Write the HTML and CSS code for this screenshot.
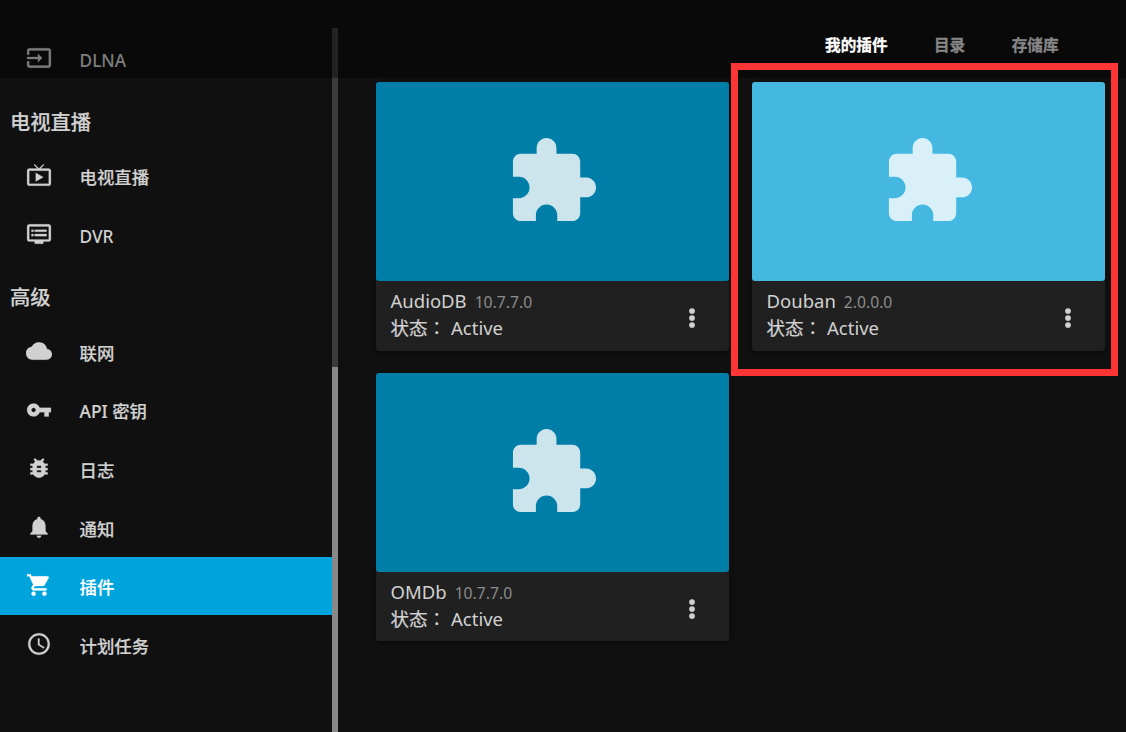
FILE: index.html
```
<!DOCTYPE html>
<html lang="zh-CN">
<head>
<meta charset="utf-8">
<title>我的插件</title>
<link rel="stylesheet" href="styles.css">
</head>
<body>
<div class="app">
  <nav class="sidebar">
    <div class="menu">
      <a class="item"><svg class="icon" viewBox="0 0 24 24"><path d="M21 3.01H3c-1.1 0-2 .9-2 2V9h2V4.99h18v14.03H3V15H1v4.01c0 1.1.9 1.98 2 1.98h18c1.1 0 2-.88 2-1.98v-14c0-1.11-.9-2-2-2zM11 16l4-4-4-4v3H1v2h10v3z"/></svg><span>DLNA</span></a>
      <h2 class="heading">电视直播</h2>
      <a class="item"><svg class="icon" viewBox="0 0 24 24"><path d="M21 6h-7.59l3.29-3.29L16 2l-4 4-4-4-.7.71L10.59 6H3c-1.1 0-2 .89-2 2v12c0 1.1.9 2 2 2h18c1.1 0 2-.9 2-2V8c0-1.11-.9-2-2-2zm0 14H3V8h18v12zM9 10v8l7-4z"/></svg><span class="cjk">电视直播</span></a>
      <a class="item"><svg class="icon" viewBox="0 0 24 24"><path d="M21 3H3c-1.1 0-2 .9-2 2v12c0 1.1.9 2 2 2h5v2h8v-2h5c1.1 0 1.99-.9 1.99-2L23 5c0-1.1-.9-2-2-2zm0 14H3V5h18v12zm-2-9H8v2h11V8zm0 4H8v2h11v-2zM7 8H5v2h2V8zm0 4H5v2h2v-2z"/></svg><span>DVR</span></a>
      <h2 class="heading">高级</h2>
      <a class="item"><svg class="icon" viewBox="0 0 24 24"><path d="M19.35 10.04C18.67 6.59 15.64 4 12 4 9.11 4 6.6 5.64 5.35 8.04 2.34 8.36 0 10.91 0 14c0 3.31 2.69 6 6 6h13c2.76 0 5-2.24 5-5 0-2.64-2.05-4.78-4.65-4.96z"/></svg><span class="cjk">联网</span></a>
      <a class="item"><svg class="icon" viewBox="0 0 24 24"><path d="M12.65 10C11.83 7.67 9.61 6 7 6c-3.31 0-6 2.69-6 6s2.69 6 6 6c2.61 0 4.83-1.67 5.65-4H17v4h4v-4h2v-4H12.65zM7 14c-1.1 0-2-.9-2-2s.9-2 2-2 2 .9 2 2-.9 2-2 2z"/></svg><span class="cjk">API 密钥</span></a>
      <a class="item"><svg class="icon" viewBox="0 0 24 24"><path d="M20 8h-2.81c-.45-.78-1.07-1.45-1.82-1.96L17 4.41 15.59 3l-2.17 2.17C12.96 5.06 12.49 5 12 5s-.96.06-1.41.17L8.41 3 7 4.41l1.62 1.63C7.88 6.55 7.26 7.22 6.81 8H4v2h2.09c-.05.33-.09.66-.09 1v1H4v2h2v1c0 .34.04.67.09 1H4v2h2.81c1.04 1.79 2.97 3 5.19 3s4.15-1.21 5.19-3H20v-2h-2.09c.05-.33.09-.66.09-1v-1h2v-2h-2v-1c0-.34-.04-.67-.09-1H20V8zm-6 8h-4v-2h4v2zm0-4h-4v-2h4v2z"/></svg><span class="cjk">日志</span></a>
      <a class="item"><svg class="icon" viewBox="0 0 24 24"><path d="M12 22c1.1 0 2-.9 2-2h-4c0 1.1.89 2 2 2zm6-6v-5c0-3.07-1.64-5.64-4.5-6.32V4c0-.83-.67-1.5-1.5-1.5s-1.5.67-1.5 1.5v.68C7.63 5.36 6 7.92 6 11v5l-2 2v1h16v-1l-2-2z"/></svg><span class="cjk">通知</span></a>
      <a class="item active"><svg class="icon" viewBox="0 0 24 24"><path d="M7 18c-1.1 0-1.99.9-1.99 2S5.9 22 7 22s2-.9 2-2-.9-2-2-2zM1 2v2h2l3.6 7.59-1.35 2.45c-.16.28-.25.61-.25.96 0 1.1.9 2 2 2h12v-2H7.42c-.14 0-.25-.11-.25-.25l.03-.12.9-1.63h7.45c.75 0 1.41-.41 1.75-1.03l3.58-6.49c.08-.14.12-.31.12-.48 0-.55-.45-1-1-1H5.21l-.94-2H1zm16 16c-1.1 0-1.99.9-1.99 2s.89 2 1.99 2 2-.9 2-2-.9-2-2-2z"/></svg><span class="cjk">插件</span></a>
      <a class="item"><svg class="icon" viewBox="0 0 24 24"><path d="M11.99 2C6.47 2 2 6.48 2 12s4.47 10 9.99 10C17.52 22 22 17.52 22 12S17.52 2 11.99 2zM12 20c-4.42 0-8-3.58-8-8s3.58-8 8-8 8 3.58 8 8-3.58 8-8 8zm.5-13H11v6l5.25 3.15.75-1.23-4.5-2.67z"/></svg><span class="cjk">计划任务</span></a>
    </div>
    <div class="scrollbar"><div class="thumb"></div></div>
  </nav>
  <main class="content">
    <article class="card">
      <div class="cover"><svg class="puzzle" viewBox="0 0 24 24"><path d="M20.5 11H19V7c0-1.1-.9-2-2-2h-4V3.500C13 2.120 11.880 1 10.500 1S8 2.120 8 3.500V5H4c-1.100 0-1.990.9-1.990 2v3.800H3.500c1.490 0 2.700 1.210 2.700 2.700s-1.210 2.700-2.700 2.700H2V20c0 1.100.9 2 2 2h3.800v-1.500c0-1.490 1.210-2.700 2.700-2.700s2.700 1.210 2.700 2.700V22H17c1.100 0 2-.9 2-2v-4h1.500c1.380 0 2.500-1.120 2.500-2.500S21.880 11 20.500 11z"/></svg></div>
      <div class="footer">
        <div class="info"><div class="name">AudioDB<span class="version">10.7.7.0</span></div><div class="state"><span class="label">状态</span><span lang="zh-TW">：</span><span class="status">Active</span></div></div>
        <svg class="more" viewBox="0 0 24 24"><path d="M12 8c1.100 0 2-.9 2-2s-.9-2-2-2-2 .9-2 2 .9 2 2 2zm0 2c-1.100 0-2 .9-2 2s.9 2 2 2 2-.9 2-2-.9-2-2-2zm0 6c-1.100 0-2 .9-2 2s.9 2 2 2 2-.9 2-2-.9-2-2-2z"/></svg>
      </div>
    </article>
    <article class="card">
      <div class="cover light"><svg class="puzzle" viewBox="0 0 24 24"><path d="M20.5 11H19V7c0-1.1-.9-2-2-2h-4V3.500C13 2.120 11.880 1 10.500 1S8 2.120 8 3.500V5H4c-1.100 0-1.990.9-1.990 2v3.800H3.500c1.490 0 2.700 1.210 2.700 2.700s-1.210 2.700-2.700 2.700H2V20c0 1.100.9 2 2 2h3.800v-1.500c0-1.490 1.210-2.700 2.700-2.700s2.700 1.210 2.700 2.700V22H17c1.100 0 2-.9 2-2v-4h1.500c1.380 0 2.500-1.120 2.500-2.500S21.880 11 20.500 11z"/></svg></div>
      <div class="footer">
        <div class="info"><div class="name">Douban<span class="version">2.0.0.0</span></div><div class="state"><span class="label">状态</span><span lang="zh-TW">：</span><span class="status">Active</span></div></div>
        <svg class="more" viewBox="0 0 24 24"><path d="M12 8c1.100 0 2-.9 2-2s-.9-2-2-2-2 .9-2 2 .9 2 2 2zm0 2c-1.100 0-2 .9-2 2s.9 2 2 2 2-.9 2-2-.9-2-2-2zm0 6c-1.100 0-2 .9-2 2s.9 2 2 2 2-.9 2-2-.9-2-2-2z"/></svg>
      </div>
      <div class="highlight"></div>
    </article>
    <article class="card">
      <div class="cover"><svg class="puzzle" viewBox="0 0 24 24"><path d="M20.5 11H19V7c0-1.1-.9-2-2-2h-4V3.500C13 2.120 11.880 1 10.500 1S8 2.120 8 3.500V5H4c-1.100 0-1.990.9-1.990 2v3.800H3.500c1.490 0 2.700 1.210 2.700 2.700s-1.210 2.700-2.700 2.700H2V20c0 1.100.9 2 2 2h3.800v-1.500c0-1.490 1.210-2.700 2.700-2.700s2.700 1.210 2.700 2.700V22H17c1.100 0 2-.9 2-2v-4h1.500c1.380 0 2.500-1.120 2.500-2.500S21.880 11 20.500 11z"/></svg></div>
      <div class="footer">
        <div class="info"><div class="name">OMDb<span class="version">10.7.7.0</span></div><div class="state"><span class="label">状态</span><span lang="zh-TW">：</span><span class="status">Active</span></div></div>
        <svg class="more" viewBox="0 0 24 24"><path d="M12 8c1.100 0 2-.9 2-2s-.9-2-2-2-2 .9-2 2 .9 2 2 2zm0 2c-1.100 0-2 .9-2 2s.9 2 2 2 2-.9 2-2-.9-2-2-2zm0 6c-1.100 0-2 .9-2 2s.9 2 2 2 2-.9 2-2-.9-2-2-2z"/></svg>
      </div>
    </article>
  </main>
  <header class="topbar">
    <span class="tab current">我的插件</span><span class="tab">目录</span><span class="tab">存储库</span>
  </header>
</div>
</body>
</html>
```
FILE: styles.css
```
* { box-sizing: border-box; }
body {
  margin: 0;
  background: #101010;
  color: #d1d1d1;
  font-family: "Noto Sans", "Noto Sans CJK TC", sans-serif;
}
.app {
  position: relative;
  display: flex;
  width: 1126px;
  height: 732px;
  overflow: hidden;
}
.sidebar { display: flex; flex: none; width: 338px; padding-top: 28px; }
.menu { flex: 1; padding-top: 1.2px; }
.item, .heading {
  display: flex;
  align-items: center;
  height: 58.6px;
  margin: 0;
  font-family: "Noto Sans", "Noto Sans CJK SC", sans-serif;
  font-weight: 500;
}
.item { padding-left: 26px; font-size: 17.3px; }
.item span { padding-top: 4px; }
.item .cjk { padding-top: 1.6px; font-size: 17.4px; -webkit-text-stroke: .2px currentColor; }
.heading { padding: 7px 0 0 10px; font-size: 20.3px; -webkit-text-stroke: .2px currentColor; }
.icon { width: 26px; height: 26px; margin: 0 27.5px 1px 0; fill: currentColor; stroke: currentColor; stroke-width: .2; }
.active { background: #00a4dc; color: #fff; }
.scrollbar { width: 6px; padding-top: 339px; background: #3b3b3b; }
.thumb { height: 100%; background: #888; }
.content {
  display: grid;
  grid-template-columns: 353px 353px;
  grid-template-rows: 269px 268px;
  gap: 22px 23px;
  align-content: start;
  padding: 82px 0 0 38px;
}
.card {
  position: relative;
  background: #202020;
  border-radius: 3px;
  box-shadow: 0 1px 4px rgba(0, 0, 0, .4);
}
.cover {
  display: flex;
  align-items: center;
  justify-content: center;
  height: 199px;
  background: #007ea8;
  border-radius: 3px;
}
.light { background: #44b8e0; }
.puzzle { width: 95px; height: 95px; margin: 0 1px 1px 0; fill: #fff; opacity: .8; }
.footer {
  display: flex;
  align-items: flex-start;
  justify-content: space-between;
  padding: 6px 23px 0 14.5px;
}
.info { font-size: 18.5px; line-height: 27px; white-space: nowrap; }
.name { height: 27px; }
.version { margin-left: 8px; font-size: 15.7px; color: #8c8c8c; }
.label { -webkit-text-stroke: .25px currentColor; }
.state { font-size: 18.5px; }
.status { margin-left: 5px; }
.more { width: 28px; height: 28px; margin-top: 17px; fill: currentColor; stroke: currentColor; stroke-width: .9; }
.highlight {
  position: absolute;
  left: -21px;
  top: -19px;
  width: 387px;
  height: 313px;
  border: 7px solid #fd3535;
  z-index: 2;
}
.topbar {
  position: absolute;
  inset: 0 0 auto 0;
  display: flex;
  justify-content: flex-end;
  gap: 46.5px;
  height: 78px;
  padding: 34px 67.5px 0 0;
  background: rgba(0, 0, 0, .4);
  font: 700 15.6px/22px "Noto Sans", "Noto Sans CJK SC", sans-serif;
}
.tab { color: #868686; -webkit-text-stroke: .3px currentColor; }
.current { color: #fff; }
```
